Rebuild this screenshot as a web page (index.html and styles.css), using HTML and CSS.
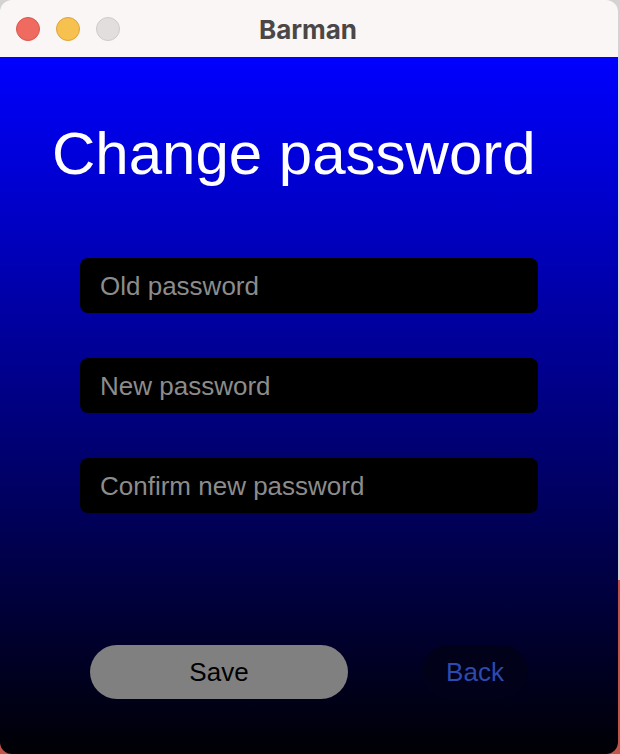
FILE: index.html
```html
<!DOCTYPE html>
<html>
<head>
<meta charset="utf-8">
<title>Barman</title>
<link rel="stylesheet" href="styles.css">
</head>
<body>
<div class="window">
  <div class="titlebar">
    <div class="lights">
      <span class="light red"></span>
      <span class="light yellow"></span>
      <span class="light gray"></span>
    </div>
    <div class="title">Barman</div>
  </div>
  <div class="content">
    <h1 class="heading">Change password</h1>
    <div class="fields">
      <input class="field" type="password" placeholder="Old password">
      <input class="field" type="password" placeholder="New password">
      <input class="field" type="password" placeholder="Confirm new password">
    </div>
    <div class="actions">
      <button class="btn save">Save</button>
      <button class="btn back">Back</button>
    </div>
  </div>
</div>
</body>
</html>
```

FILE: styles.css
```css
html, body {
  margin: 0;
  padding: 0;
  height: 754px;
  overflow: hidden;
}
body {
  background: linear-gradient(to bottom, #d4d2d2 0, #d4d2d2 580px, #c0564a 580px, #c0564a 100%);
  font-family: "Liberation Sans", Arial, sans-serif;
}
.window {
  width: 618px;
  height: 754px;
  border-radius: 12px;
  overflow: hidden;
  display: flex;
  flex-direction: column;
}
.titlebar {
  height: 57px;
  flex: 0 0 57px;
  background: #f9f6f5;
  position: relative;
  display: flex;
  align-items: center;
  justify-content: center;
}
.lights {
  position: absolute;
  left: 16px;
  top: 17px;
  display: flex;
  gap: 16px;
}
.light {
  width: 24px;
  height: 24px;
  border-radius: 50%;
  box-sizing: border-box;
}
.red { background: #ef6b60; border: 1px solid #d9574d; }
.yellow { background: #f7c150; border: 1px solid #dca53b; }
.gray { background: #e1dedd; border: 1px solid #cfcbca; }
.title {
  font-family: "Inter", "Open Sans", sans-serif;
  font-weight: 700;
  font-size: 26px;
  color: #4b4747;
  margin-left: -2px;
  margin-top: 1px;
}
.content {
  flex: 1;
  background: linear-gradient(to bottom, #0000ff 0%, #000004 100%);
  display: flex;
  flex-direction: column;
  padding-top: 67px;
}
.heading {
  margin: 0 0 0 52px;
  font-family: "Liberation Sans", Arial, sans-serif;
  font-weight: 400;
  font-size: 60px;
  line-height: 60px;
  color: #ffffff;
}
.fields {
  display: flex;
  flex-direction: column;
  gap: 45px;
  margin: 74px 0 0 80px;
}
.field {
  width: 458px;
  height: 55px;
  box-sizing: border-box;
  border: none;
  outline: none;
  border-radius: 8px;
  background: #000000;
  padding: 2px 20px 0;
  font-family: "Liberation Sans", Arial, sans-serif;
  font-size: 26px;
  color: #ffffff;
}
.field::placeholder {
  color: #8c8c8c;
  opacity: 1;
}
.actions {
  display: flex;
  align-items: center;
  margin: 132px 0 0 90px;
}
.btn {
  height: 54px;
  border: none;
  border-radius: 27px;
  font-family: "Liberation Sans", Arial, sans-serif;
  font-size: 26px;
  padding: 0;
}
.save {
  width: 258px;
  background: #808080;
  color: #000000;
}
.back {
  width: 106px;
  margin-left: 74px;
  background: #01011a;
  color: #2d4aae;
}
```
